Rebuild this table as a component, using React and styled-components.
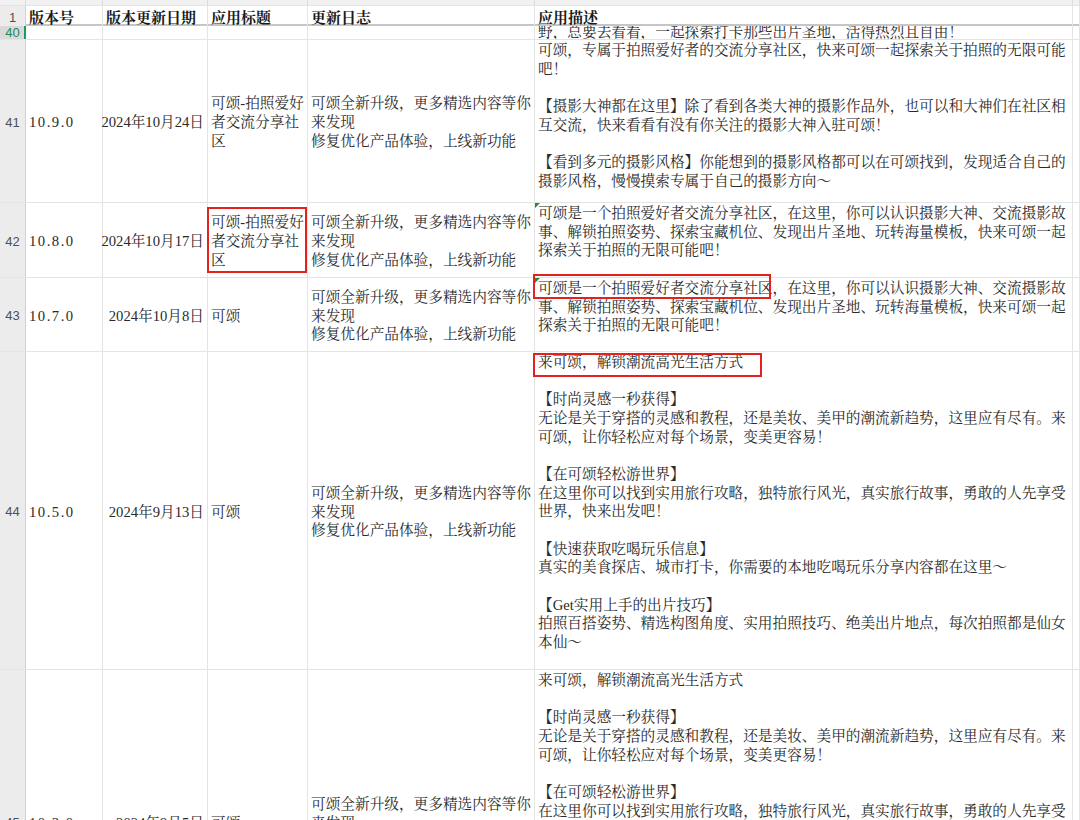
import React from 'react';
import styled, { createGlobalStyle, css } from 'styled-components';

const COLS = '26px 77px 105px 100px 227px 538px 1fr';
const TEXT_FONT = '"Liberation Serif", "Noto Serif CJK SC", "Noto Sans CJK SC", serif';

const Global = createGlobalStyle`
  html, body { margin: 0; padding: 0; background: #fff; overflow: hidden; }
  body { width: 1080px; height: 820px; font-family: ${TEXT_FONT}; }
`;

const Sheet = styled.div`
  width: 1080px;
  height: 820px;
  overflow: hidden;
  background: #fff;
  color: #2a2a2a;
  font-family: ${TEXT_FONT};
  font-size: 14.67px;
`;

const Row = styled.div`
  display: grid;
  grid-template-columns: ${COLS};
  height: ${(p) => p.$h}px;
  box-sizing: border-box;
  border-bottom: ${(p) => (p.$frozen ? '2px solid #c6c6c6' : '1px solid #e4e4e4')};
  background: ${(p) => (p.$strip ? '#f1f1f1' : '#fff')};
  overflow: ${(p) => (p.$strip ? 'hidden' : 'visible')};
`;

const ColLetter = styled.div`
  box-sizing: border-box;
  border-right: 1px solid #dcdcdc;
  display: flex;
  align-items: flex-end;
  justify-content: center;
  overflow: hidden;
  font-family: "Liberation Sans", "Noto Sans", sans-serif;
  font-size: 12px;
  line-height: 12px;
  color: #777;
  padding-bottom: 3px;
`;

const RowHead = styled.div`
  box-sizing: border-box;
  border-right: 1px solid #d2d2d2;
  background: ${(p) => (p.$active ? '#d9d9d9' : '#ececec')};
  color: ${(p) => (p.$active ? '#1c8a58' : '#505050')};
  font-family: "Liberation Sans", "Noto Sans", sans-serif;
  font-size: 13px;
  display: flex;
  align-items: center;
  justify-content: center;
  padding-top: ${(p) => (p.$pt == null ? 2 : p.$pt)}px;
  overflow: hidden;
`;

const Cell = styled.div`
  position: relative;
  box-sizing: border-box;
  border-right: 1px solid #e4e4e4;
  display: flex;
  flex-direction: column;
  justify-content: ${(p) =>
    p.$v === 'top' ? 'flex-start' : p.$v === 'bottom' ? 'flex-end' : 'center'};
  align-items: ${(p) => (p.$align === 'right' ? 'flex-end' : 'flex-start')};
  text-align: ${(p) => (p.$align === 'right' ? 'right' : 'left')};
  padding: ${(p) => (p.$v === 'top' ? '1px 3px 0' : p.$v === 'bottom' ? '0 3px' : '3px 3px 0')};
  white-space: pre;
  line-height: 18.67px;
  overflow: ${(p) => (p.$clip ? 'hidden' : 'visible')};
  ${(p) =>
    p.$flag &&
    css`
      &::before {
        content: '';
        position: absolute;
        top: 0;
        left: 0;
        border-top: 5px solid #1f8a4a;
        border-right: 5px solid transparent;
      }
    `}
  ${(p) =>
    p.$selected &&
    css`
      &::after {
        content: '';
        position: absolute;
        top: 0;
        bottom: 0;
        left: -2px;
        width: 2px;
        background: #1f9a63;
      }
    `}
`;

const VersionCell = styled(Cell)`
  letter-spacing: 1.5px;
`;

const HeadCell = styled(Cell)`
  font-weight: 700;
  font-size: 15px;
  color: #1a1a1a;
  padding-top: 3px;
`;

const ClippedLine = styled.span`
  margin-bottom: -3px;
`;

const Mark = styled.span`
  position: absolute;
  left: ${(p) => p.$l}px;
  top: ${(p) => p.$t}px;
  width: ${(p) => p.$w}px;
  height: ${(p) => p.$hh}px;
  border: 2px solid #e3221d;
  box-sizing: border-box;
  pointer-events: none;
`;

const TITLE_LONG = '可颂-拍照爱好\n者交流分享社\n区';
const LOG = '可颂全新升级，更多精选内容等你\n来发现\n修复优化产品体验，上线新功能';
const DESC_41 = [
  '可颂，专属于拍照爱好者的交流分享社区，快来可颂一起探索关于拍照的无限可能',
  '吧！',
  '',
  '【摄影大神都在这里】除了看到各类大神的摄影作品外，也可以和大神们在社区相',
  '互交流，快来看看有没有你关注的摄影大神入驻可颂！',
  '',
  '【看到多元的摄影风格】你能想到的摄影风格都可以在可颂找到，发现适合自己的',
  '摄影风格，慢慢摸索专属于自己的摄影方向～',
].join('\n');
const DESC_42 = [
  '可颂是一个拍照爱好者交流分享社区，在这里，你可以认识摄影大神、交流摄影故',
  '事、解锁拍照姿势、探索宝藏机位、发现出片圣地、玩转海量模板，快来可颂一起',
  '探索关于拍照的无限可能吧！',
].join('\n');
const DESC_44 = [
  '来可颂，解锁潮流高光生活方式',
  '',
  '【时尚灵感一秒获得】',
  '无论是关于穿搭的灵感和教程，还是美妆、美甲的潮流新趋势，这里应有尽有。来',
  '可颂，让你轻松应对每个场景，变美更容易！',
  '',
  '【在可颂轻松游世界】',
  '在这里你可以找到实用旅行攻略，独特旅行风光，真实旅行故事，勇敢的人先享受',
  '世界，快来出发吧！',
  '',
  '【快速获取吃喝玩乐信息】',
  '真实的美食探店、城市打卡，你需要的本地吃喝玩乐分享内容都在这里～',
  '',
  '【Get实用上手的出片技巧】',
  '拍照百搭姿势、精选构图角度、实用拍照技巧、绝美出片地点，每次拍照都是仙女',
  '本仙～',
].join('\n');

const rows = [
  { n: 41, h: 163, ver: '10.9.0', date: '2024年10月24日', title: TITLE_LONG, desc: DESC_41 },
  {
    n: 42, h: 75, ver: '10.8.0', date: '2024年10月17日', title: TITLE_LONG, desc: DESC_42,
    flag: true, titleMark: true,
  },
  {
    n: 43, h: 74, ver: '10.7.0', date: '2024年10月8日', title: '可颂', desc: DESC_42,
    flag: true, descMark: { l: -2, t: -4, w: 238, h: 25 },
  },
  {
    n: 44, h: 318, ver: '10.5.0', date: '2024年9月13日', title: '可颂', desc: DESC_44,
    descMark: { l: -2, t: 1, w: 229, h: 24 },
  },
  { n: 45, h: 304, ver: '10.3.0', date: '2024年9月5日', title: '可颂', desc: DESC_44 },
];

export default function App() {
  return (
    <Sheet>
      <Global />
      <Row $h={6} $strip>
        <ColLetter />
        <ColLetter>A</ColLetter>
        <ColLetter>B</ColLetter>
        <ColLetter>C</ColLetter>
        <ColLetter>D</ColLetter>
        <ColLetter>E</ColLetter>
        <ColLetter />
      </Row>
      <Row $h={20} $frozen>
        <RowHead $pt={2}>1</RowHead>
        <HeadCell>版本号</HeadCell>
        <HeadCell>版本更新日期</HeadCell>
        <HeadCell>应用标题</HeadCell>
        <HeadCell>更新日志</HeadCell>
        <HeadCell>应用描述</HeadCell>
        <Cell />
      </Row>
      <Row $h={14}>
        <RowHead $active $pt={0}>40</RowHead>
        <Cell $selected />
        <Cell />
        <Cell />
        <Cell />
        <Cell $v="bottom" $clip>
          <ClippedLine>野，总要去看看，一起探索打卡那些出片圣地，活得热烈且自由！</ClippedLine>
        </Cell>
        <Cell />
      </Row>
      {rows.map((r) => (
        <Row key={r.n} $h={r.h}>
          <RowHead>{r.n}</RowHead>
          <VersionCell>{r.ver}</VersionCell>
          <Cell $align="right">{r.date}</Cell>
          <Cell>
            {r.title}
            {r.titleMark && <Mark $l={-1} $t={4} $w={100} $hh={66} />}
          </Cell>
          <Cell>{LOG}</Cell>
          <Cell $v="top" $flag={r.flag}>
            {r.desc}
            {r.descMark && (
              <Mark $l={r.descMark.l} $t={r.descMark.t} $w={r.descMark.w} $hh={r.descMark.h} />
            )}
          </Cell>
          <Cell />
        </Row>
      ))}
    </Sheet>
  );
}
